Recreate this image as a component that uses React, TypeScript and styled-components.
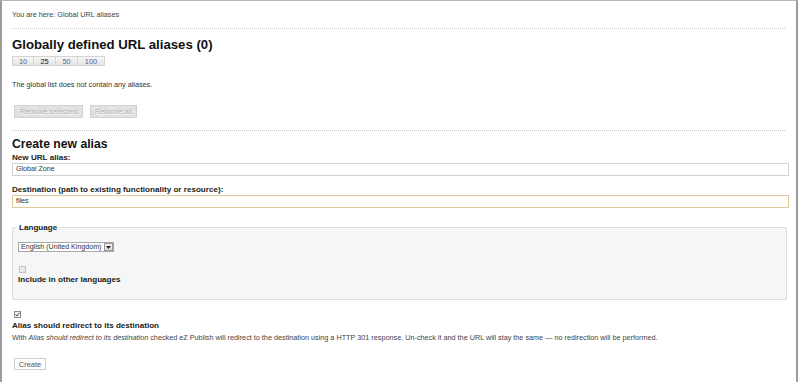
import styled, { createGlobalStyle } from "styled-components";

const GlobalStyle = createGlobalStyle`
  html, body {
    margin: 0;
    padding: 0;
    background: #ffffff;
  }
  body {
    font-family: "Liberation Sans", Arial, sans-serif;
    color: #222;
  }
`;

const Frame = styled.div`
  box-sizing: border-box;
  width: 798px;
  height: 382px;
  border-top: 1px solid #b8b8b8;
  border-left: 2px solid #9c9c9c;
  border-right: 2px solid #9c9c9c;
  padding: 0 7px 0 10px;
  overflow: hidden;
`;

const Breadcrumb = styled.div`
  padding-top: 9px;
  padding-bottom: 8px;
  margin-right: 4px;
  border-bottom: 1px dotted #c8c8c8;
  font-size: 7.25px;
  line-height: 10px;
  color: #444;
`;

const Section = styled.div<{ $divider?: boolean }>`
  margin-right: 4px;
  padding-bottom: ${(p) => (p.$divider ? "12px" : "0")};
  border-bottom: ${(p) => (p.$divider ? "1px dotted #c8c8c8" : "none")};
`;

const Heading = styled.h2<{ $size: number; $top: number }>`
  margin: ${(p) => p.$top}px 0 0 0;
  font-size: ${(p) => p.$size}px;
  line-height: 15px;
  font-weight: bold;
  color: #111;
`;

const Pager = styled.div`
  display: flex;
  margin-top: 4px;
`;

const PageButton = styled.span<{ $w: number; $current?: boolean }>`
  box-sizing: border-box;
  width: ${(p) => p.$w}px;
  height: 10px;
  display: flex;
  align-items: center;
  justify-content: center;
  border: 1px solid #d4d4d4;
  margin-left: -1px;
  &:first-child {
    margin-left: 0;
  }
  background: linear-gradient(#f6f6f6, #e4e4e4);
  font-size: 7.4px;
  color: ${(p) => (p.$current ? "#111" : "#4f6a8c")};
`;

const Note = styled.p<{ $top: number }>`
  margin: ${(p) => p.$top}px 0 0 0;
  font-size: 7.25px;
  line-height: 9px;
  color: #333;
`;

const ButtonRow = styled.div`
  display: flex;
  gap: 7px;
  margin-top: 16px;
  padding-left: 2px;
`;

const DisabledButton = styled.span<{ $w: number }>`
  box-sizing: border-box;
  width: ${(p) => p.$w}px;
  height: 13px;
  display: flex;
  align-items: center;
  justify-content: center;
  border: 1px solid #d2d2d2;
  background: repeating-linear-gradient(
    45deg,
    #dcdcdc 0px,
    #dcdcdc 1px,
    #e8e8e8 1px,
    #e8e8e8 2px
  );
  font-size: 7.4px;
  color: #b0b0b0;
  text-shadow: 0 1px 0 #fff;
`;

const Label = styled.label<{ $top: number }>`
  display: block;
  margin-top: ${(p) => p.$top}px;
  font-size: 8.1px;
  line-height: 9px;
  font-weight: bold;
  color: #222;
`;

const TextField = styled.div<{ $focus?: boolean }>`
  box-sizing: border-box;
  height: 13px;
  margin-top: 1px;
  border: 1px solid ${(p) => (p.$focus ? "#dccb9e" : "#d2d2d2")};
  background: ${(p) => (p.$focus ? "#fffefa" : "#fff")};
  padding-left: 3px;
  font-size: 7.1px;
  line-height: 11px;
  color: #333;
`;

const Fieldset = styled.fieldset`
  box-sizing: border-box;
  margin: 15px 2px 0 0;
  height: 77px;
  padding: 5px 6px 0 5px;
  border: 1px solid #dcdcdc;
  border-radius: 2px;
  background: #f6f6f6;
`;

const Legend = styled.legend`
  padding: 0 3px;
  margin-left: -2px;
  font-size: 8.1px;
  line-height: 9px;
  font-weight: bold;
  color: #222;
`;

const SelectBox = styled.div`
  box-sizing: border-box;
  display: flex;
  align-items: center;
  width: 96px;
  height: 10px;
  margin-top: 5px;
  border: 1px solid #a8a8a8;
  background: #fff;
  font-size: 7.1px;
  color: #333;
  padding-left: 2px;
`;

const SelectText = styled.span`
  flex: 1;
  white-space: nowrap;
`;

const SelectArrow = styled.span`
  box-sizing: border-box;
  width: 9px;
  height: 8px;
  border: 1px solid #9a9a9a;
  background: linear-gradient(#f4f4f4, #dadada);
  display: flex;
  align-items: center;
  justify-content: center;
`;

const Check = styled.span<{ $checked?: boolean; $top: number; $left: number }>`
  box-sizing: border-box;
  display: flex;
  align-items: center;
  justify-content: center;
  width: 7px;
  height: 7px;
  margin-top: ${(p) => p.$top}px;
  margin-left: ${(p) => p.$left}px;
  border: 1px solid ${(p) => (p.$checked ? "#8c8c8c" : "#c4c4c4")};
  background: ${(p) => (p.$checked ? "#eef0f4" : "#e9e9e9")};
`;

const Description = styled.p`
  margin: 3px 0 0 0;
  font-size: 7.25px;
  line-height: 9px;
  color: #444;
  white-space: nowrap;
  em {
    font-style: italic;
  }
`;

const CreateButton = styled.span`
  box-sizing: border-box;
  display: flex;
  align-items: center;
  justify-content: center;
  width: 32px;
  height: 12px;
  margin: 16px 0 0 2px;
  border: 1px solid #d0d0d0;
  background: #fff;
  font-size: 7.5px;
  color: #555;
`;

export default function App() {
  return (
    <>
      <GlobalStyle />
      <Frame>
        <Breadcrumb>You are here: Global URL aliases</Breadcrumb>

        <Section $divider>
          <Heading $size={13.2} $top={8}>
            Globally defined URL aliases (0)
          </Heading>
          <Pager>
            <PageButton $w={22}>10</PageButton>
            <PageButton $w={23} $current>
              25
            </PageButton>
            <PageButton $w={23}>50</PageButton>
            <PageButton $w={28}>100</PageButton>
          </Pager>
          <Note $top={14}>The global list does not contain any aliases.</Note>
          <ButtonRow>
            <DisabledButton $w={69}>Remove selected</DisabledButton>
            <DisabledButton $w={47}>Remove all</DisabledButton>
          </ButtonRow>
        </Section>

        <Heading $size={12.2} $top={6}>
          Create new alias
        </Heading>
        <Label $top={1}>New URL alias:</Label>
        <TextField>Global Zone</TextField>
        <Label $top={9}>Destination (path to existing functionality or resource):</Label>
        <TextField $focus>files</TextField>

        <Fieldset>
          <Legend>Language</Legend>
          <SelectBox>
            <SelectText>English (United Kingdom)</SelectText>
            <SelectArrow>
              <svg width="5" height="3" viewBox="0 0 5 3">
                <path d="M0 0H5L2.5 3Z" fill="#222" />
              </svg>
            </SelectArrow>
          </SelectBox>
          <Check $top={14} $left={1} />
          <Label $top={2}>Include in other languages</Label>
        </Fieldset>

        <Check $checked $top={11} $left={2}>
          <svg width="5" height="5" viewBox="0 0 5 5">
            <path d="M0.6 2.6L2 4L4.4 0.8" stroke="#333" strokeWidth="0.9" fill="none" />
          </svg>
        </Check>
        <Label $top={3}>Alias should redirect to its destination</Label>
        <Description>
          With <em>Alias should redirect to its destination</em> checked eZ Publish will
          redirect to the destination using a HTTP 301 response. Un-check it and the URL
          will stay the same — no redirection will be performed.
        </Description>
        <CreateButton>Create</CreateButton>
      </Frame>
    </>
  );
}
